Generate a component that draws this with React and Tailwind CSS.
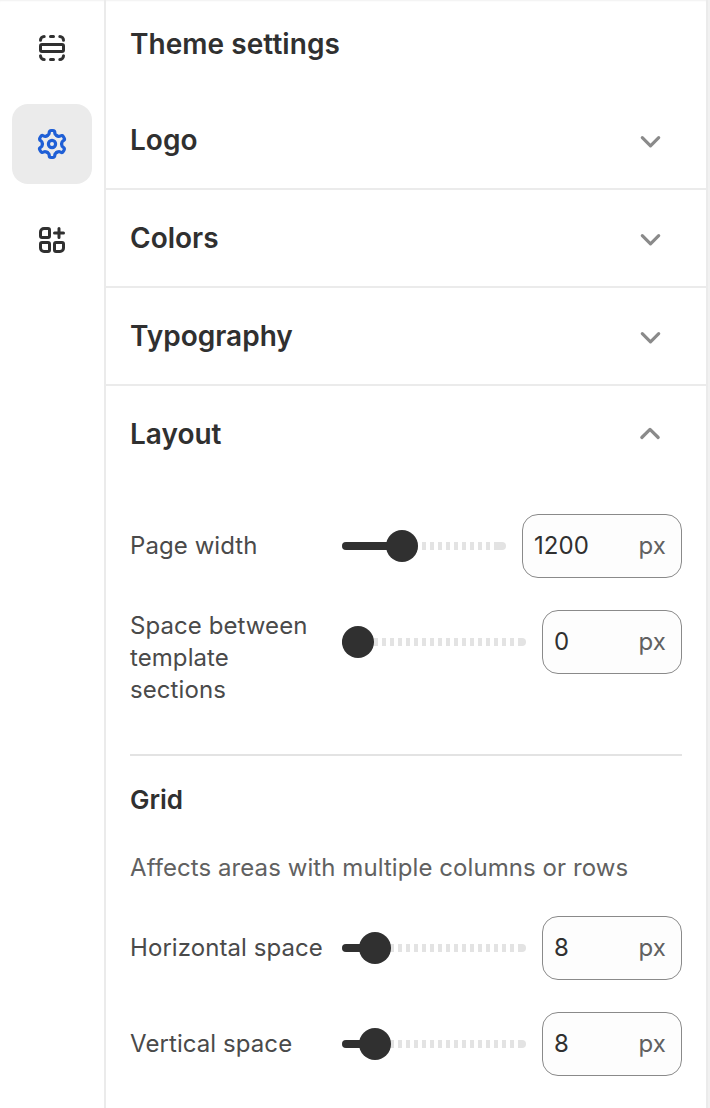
const SECTIONS = ['Logo', 'Colors', 'Typography'];

const LAYOUT_FIELDS = [
  { label: 'Page width', value: 1200, progress: 60, wide: true },
  { label: 'Space between template sections', value: 0, progress: 16, multiline: true },
];

const GRID_FIELDS = [
  { label: 'Horizontal space', value: 8, progress: 33 },
  { label: 'Vertical space', value: 8, progress: 33 },
];

const TEETH = [0, 60, 120, 180, 240, 300];

function Icon({ children, strokeWidth = 1.5, className = '' }) {
  return (
    <svg
      viewBox="0 0 20 20"
      className={`size-10 ${className}`}
      fill="none"
      stroke="currentColor"
      strokeWidth={strokeWidth}
      strokeLinecap="round"
      strokeLinejoin="round"
    >
      {children}
    </svg>
  );
}

function SectionsIcon() {
  return (
    <Icon>
      <rect x="4.25" y="8.25" width="11.5" height="3.5" rx="0.75" />
      <path d="M4.25 6.1c0-1.02.83-1.85 1.85-1.85M9.25 4.25h1.5M13.9 4.25c1.02 0 1.85.83 1.85 1.85" />
      <path d="M4.25 13.9c0 1.02.83 1.85 1.85 1.85M9.25 15.75h1.5M13.9 15.75c1.02 0 1.85-.83 1.85-1.85" />
    </Icon>
  );
}

function SettingsIcon() {
  return (
    <Icon strokeWidth={1.6}>
      <circle cx="10" cy="10" r="1.8" />
      <g transform="translate(10 10)">
        {TEETH.map((angle) => (
          <path
            key={angle}
            transform={`rotate(${angle})`}
            d="M-2.4-4.16L-2.1-4.4Q-1.4-4.85-1.4-5.4V-5.8a.95.95 0 0 1 .95-.95h.9a.95.95 0 0 1 .95.95V-5.4Q1.4-4.85 2.1-4.4L2.4-4.16"
          />
        ))}
      </g>
    </Icon>
  );
}

function AppsIcon() {
  return (
    <Icon>
      <path d="M6 4.25h2a.75.75 0 0 1 .75.75v3a.75.75 0 0 1-.75.75H5A.75.75 0 0 1 4.25 8V6A1.75 1.75 0 0 1 6 4.25Z" />
      <path d="M5 11.25h3a.75.75 0 0 1 .75.75v3a.75.75 0 0 1-.75.75H6A1.75 1.75 0 0 1 4.25 14v-2a.75.75 0 0 1 .75-.75Z" />
      <path d="M12 11.25h3a.75.75 0 0 1 .75.75v2A1.75 1.75 0 0 1 14 15.75h-2a.75.75 0 0 1-.75-.75v-3a.75.75 0 0 1 .75-.75Z" />
      <path d="M13.5 4.25v4.5M11.25 6.5h4.5" />
    </Icon>
  );
}

function Chevron({ up = false }) {
  return (
    <Icon strokeWidth={1.6} className="text-[#8a8a8a]">
      {up ? <path d="m5.9 11.75 4.1-4.05 4.1 4.05" /> : <path d="m6.15 8.85 4.1 4.05 4.1-4.05" />}
    </Icon>
  );
}

function SectionHeader({ title, open = false }) {
  return (
    <button
      className={`flex w-full items-center justify-between pl-6 pr-9 ${open ? 'h-24' : 'h-[98px] border-b-2 border-[#ebebeb]'}`}
    >
      <span className="text-[28px] font-semibold leading-10 text-[#303030]">{title}</span>
      <Chevron up={open} />
    </button>
  );
}

function Slider({ progress }) {
  return (
    <div className="relative flex h-16 flex-1 items-center">
      <div className="flex h-2 w-full overflow-hidden rounded-full">
        <div className="flex-1 bg-[repeating-linear-gradient(to_right,#e3e3e3_0_4px,transparent_4px_8px)]" />
        <div className="w-2 bg-[#e3e3e3]" />
      </div>
      <div className="absolute left-0 h-2 rounded-full bg-[#303030]" style={{ width: progress }} />
      <div className="absolute size-8 -translate-x-1/2 rounded-full bg-[#303030]" style={{ left: progress }} />
    </div>
  );
}

function RangeField({ label, value, progress, wide = false, multiline = false }) {
  return (
    <div className="flex items-start">
      <div
        className={`w-[212px] pr-4 text-2xl leading-8 tracking-[0.075px] text-[#4a4a4a] ${multiline ? '' : 'pt-4'}`}
      >
        {label}
      </div>
      <Slider progress={progress} />
      <div
        className={`ml-4 flex h-16 items-center justify-between rounded-2xl border border-[#8a8a8a] bg-[#fdfdfd] pl-[11px] pr-[15px] text-2xl tracking-[0.075px] ${wide ? 'w-40' : 'w-[140px]'}`}
      >
        <span className="text-[#303030]">{value}</span>
        <span className="text-[#616161]">px</span>
      </div>
    </div>
  );
}

export default function App() {
  return (
    <div className="flex h-[1108px] w-[710px] overflow-hidden bg-[#f1f1f1] font-['Inter',sans-serif]">
      <nav className="flex w-[106px] flex-col gap-4 border-r-2 border-[#ebebeb] bg-white px-3 pt-2 text-[#303030] shadow-[inset_0_2px_2px_-1px_rgba(0,0,0,0.06)]">
        <button className="flex size-20 items-center justify-center rounded-2xl">
          <SectionsIcon />
        </button>
        <button className="flex size-20 items-center justify-center rounded-2xl bg-[#ebebeb] text-[#1f5fd6]">
          <SettingsIcon />
        </button>
        <button className="flex size-20 items-center justify-center rounded-2xl">
          <AppsIcon />
        </button>
      </nav>

      <main className="w-[602px] border-r-2 border-[#ebebeb] bg-white shadow-[inset_0_2px_2px_-1px_rgba(0,0,0,0.06)]">
        <h1 className="flex h-[92px] items-center px-6 pb-1 text-[28px] font-semibold tracking-[0.05px] text-[#303030]">
          Theme settings
        </h1>
        {SECTIONS.map((title) => (
          <SectionHeader key={title} title={title} />
        ))}
        <SectionHeader title="Layout" open />

        <div className="flex flex-col gap-8 px-6 pt-8">
          {LAYOUT_FIELDS.map((field) => (
            <RangeField key={field.label} {...field} />
          ))}
        </div>

        <div className="mx-6 mt-12 border-t-2 border-[#e3e3e3] pt-6">
          <h2 className="text-[26px] font-semibold leading-10 text-[#303030]">Grid</h2>
          <p className="mt-8 text-2xl leading-8 tracking-[0.075px] text-[#616161]">
            Affects areas with multiple columns or rows
          </p>
          <div className="mt-8 flex flex-col gap-8">
            {GRID_FIELDS.map((field) => (
              <RangeField key={field.label} {...field} />
            ))}
          </div>
        </div>
      </main>
    </div>
  );
}
